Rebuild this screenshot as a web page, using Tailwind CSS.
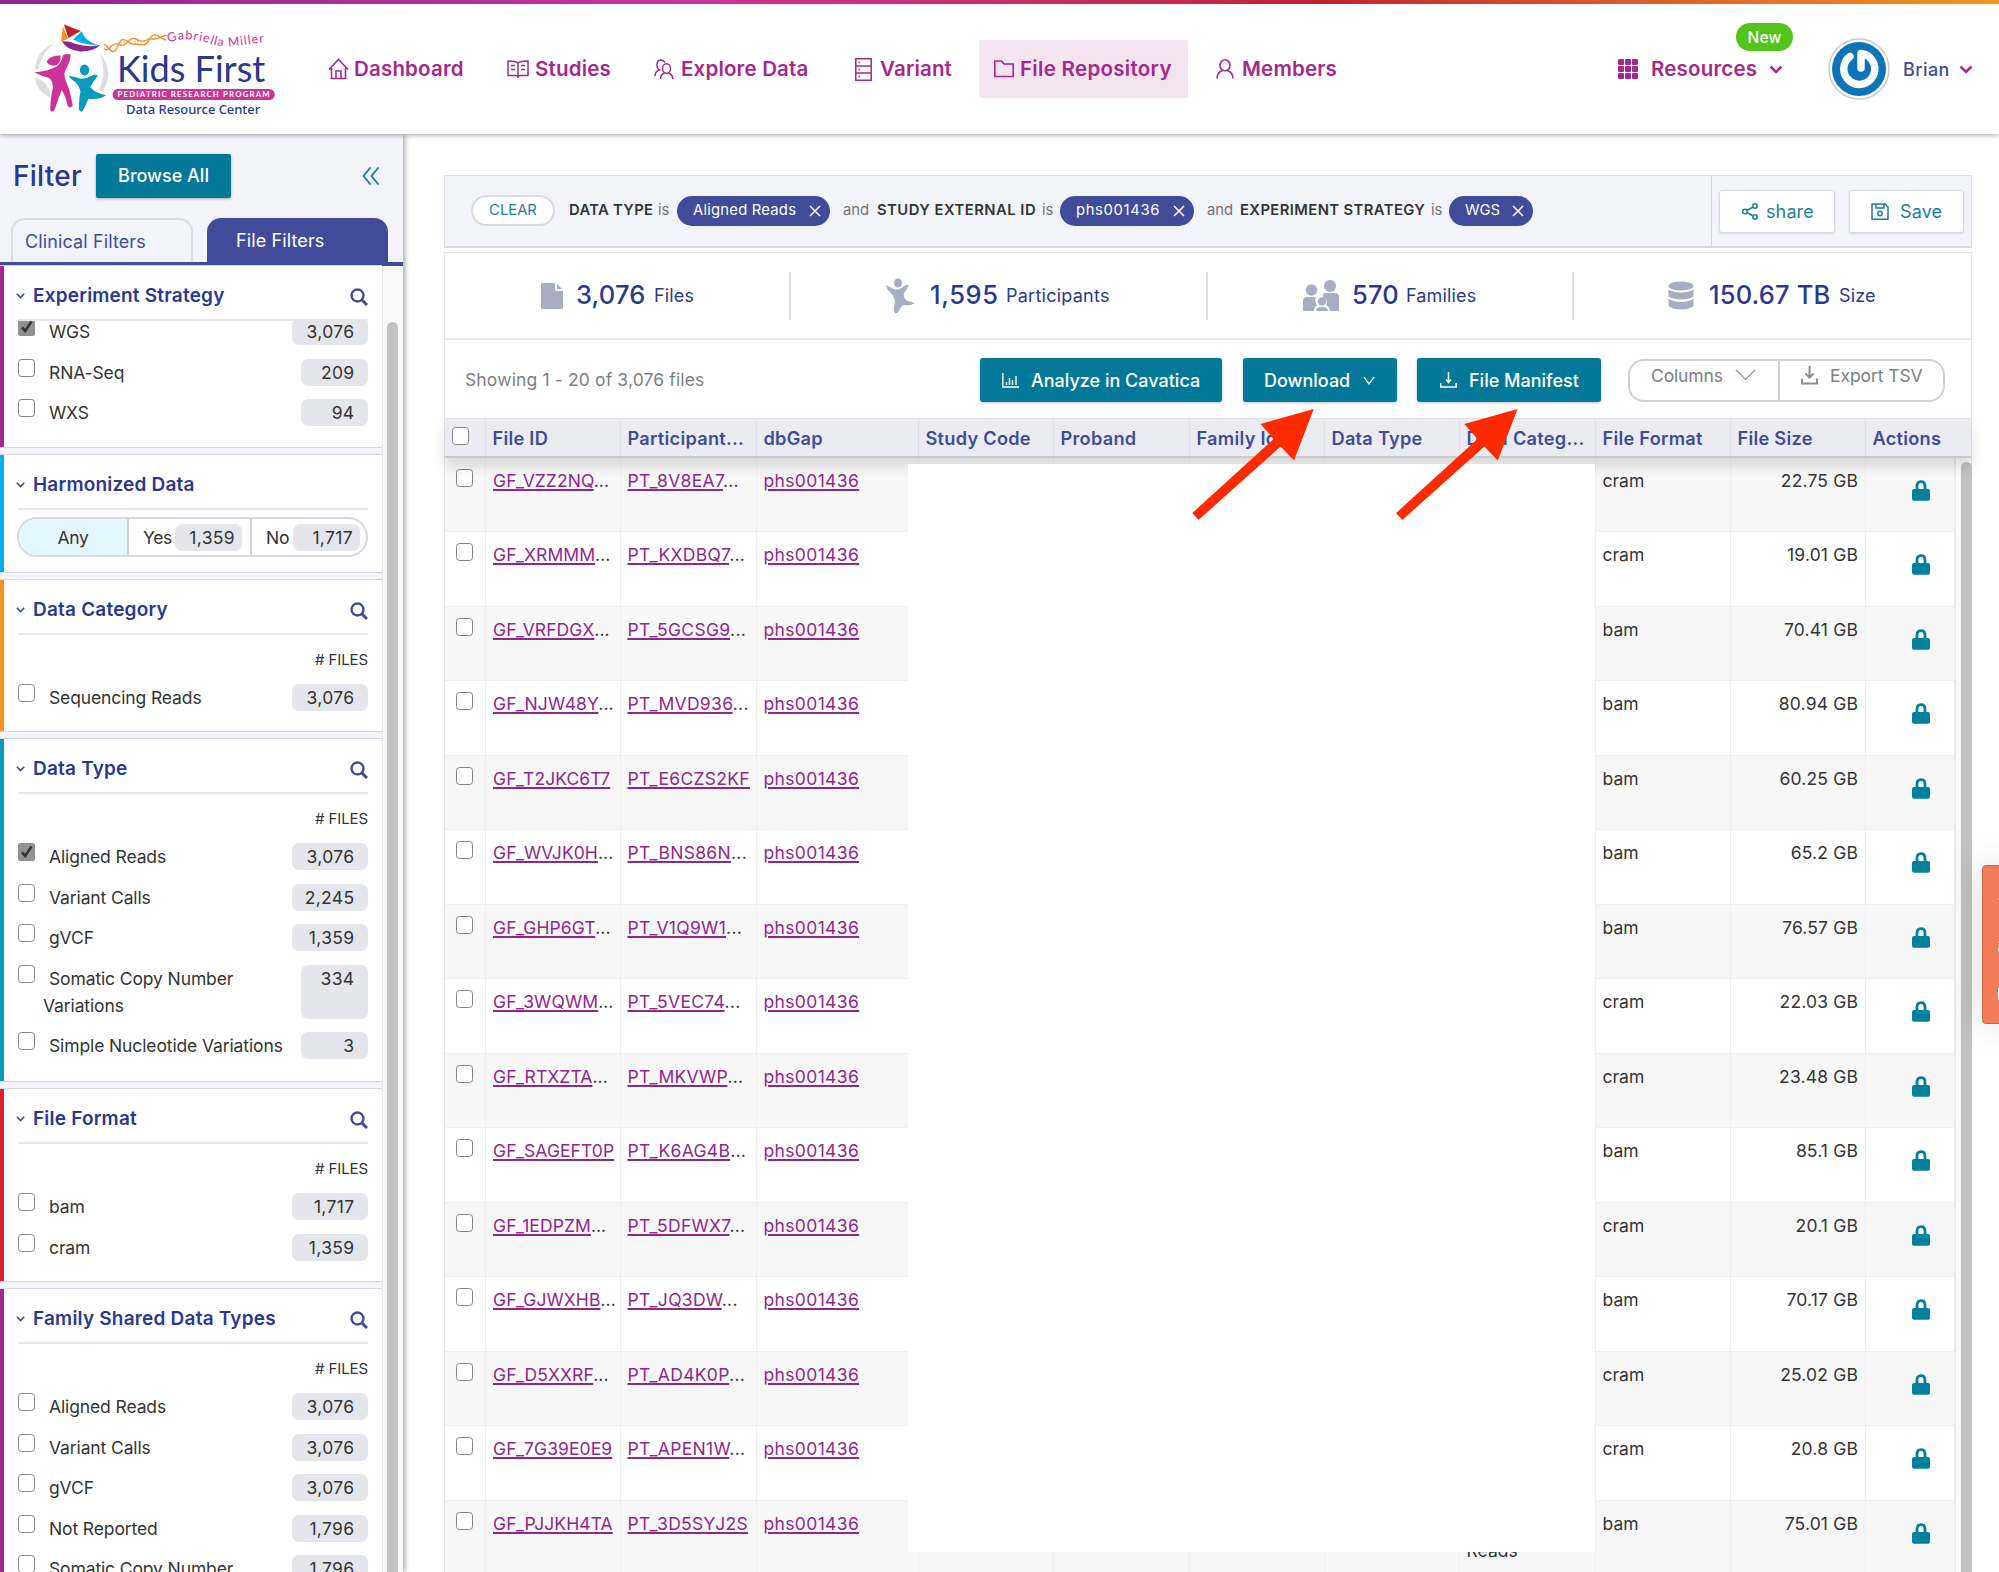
<!DOCTYPE html>
<html lang="en">
<head>
<meta charset="utf-8">
<title>Kids First Data Resource Center</title>
<script src="https://cdn.jsdelivr.net/npm/@tailwindcss/browser@4"></script>
</head>
<body class="w-[1999px] h-[1572px] overflow-hidden relative bg-white font-['Inter',sans-serif] text-[17.5px] text-[#343434]">

<header class="relative z-20 h-[134px] bg-white shadow-[0_1px_5px_rgba(0,0,0,0.35)]">
  <div class="h-1 bg-linear-to-r from-[#90278e] via-[#cc3399] via-35% to-[#f7931e]"><div class="h-1 ml-[700px] bg-linear-to-r from-[#cc3399] via-[#c1202d] via-48% to-[#f7931e]"></div></div>
  <div class="flex items-center h-[130px]">
    <svg class="ml-[19px] mr-[1px] shrink-0" width="270" height="120" viewBox="0 0 800 356">
      <g fill="#dcdddf">
        <path d="M47 178C50 140 72 110 106 102C82 118 62 145 58 178Z"/>
        <path d="M47 205C66 208 88 222 94 262C68 254 50 232 47 205Z"/>
        <path d="M238 130C268 165 275 205 247 243L236 240C255 205 254 168 238 130Z"/>
      </g>
      <path fill="#c1202d" d="M133 46L183 65L146 86Z"/>
      <path fill="#f7931e" d="M130 52L145 88L124 97Z"/>
      <path fill="#00aeef" d="M185 67Q197 98 235 107Q190 108 160 90Z"/>
      <path fill="#90278e" d="M127 96Q150 95 166 103Q205 115 241 107Q220 127 180 126Q140 122 127 96Z"/>
      <g fill="#cc3399">
        <path d="M82 156Q92 136 123 138Q124 168 101 168Q84 166 82 156Z"/>
        <path d="M45 188Q90 184 112 170Q126 158 130 137Q142 130 153 136Q151 160 136 184Q131 200 142 222Q152 245 159 288Q150 296 144 288Q138 258 126 240Q114 272 105 300Q97 310 92 300Q93 262 100 234Q100 212 88 204Q66 200 45 188Z"/>
      </g>
      <g fill="#0a9ab9">
        <ellipse cx="194" cy="181" rx="14" ry="16"/>
        <path d="M148 198Q170 202 183 207Q198 208 214 198Q225 192 234 197Q218 216 211 232Q226 250 258 256Q240 270 205 266Q196 290 188 303Q178 308 177 294Q178 262 182 245Q176 222 164 214Q152 210 148 198Z"/>
      </g>
      <g fill="none" stroke="#f7931e" stroke-width="4">
        <path d="M252 105C262 105 268 128 280 126C296 122 292 92 308 90C324 90 322 104 338 104C352 104 356 108 372 106C390 100 384 78 402 76C416 76 420 90 436 92"/>
        <path d="M252 118C266 128 268 108 284 104C296 100 300 112 312 106C326 98 326 84 342 88C356 92 360 100 374 94C388 84 396 92 410 88C422 84 424 78 438 78"/>
        <path stroke="#d9a08a" stroke-width="2" d="M262 108V122M270 108V124M294 96V110M302 92V110M312 92V108M320 92V102M344 88V104M352 92V106M360 96V106M384 86V96M394 78V92M404 76V90M412 78V88"/>
      </g>
      <path id="wave" fill="none" d="M443 100C480 82 530 92 560 100C610 122 660 104 740 98"/>
      <text fill="#cc3399" font-family="Lato" font-size="37" textLength="288" lengthAdjust="spacing"><textPath href="#wave" textLength="288">Gabriella Miller</textPath></text>
      <text x="290" y="217" fill="#2b388f" font-family="Lato" font-size="110" textLength="440" lengthAdjust="spacingAndGlyphs">Kids First</text>
      <rect x="277" y="237" width="481" height="33" rx="16" fill="#cc3399"/>
      <text x="292" y="262" fill="#fff" font-family="Lato" font-weight="700" font-size="23" textLength="451">PEDIATRIC RESEARCH PROGRAM</text>
      <text x="317" y="311" fill="#2b388f" font-family="Noto Sans" font-weight="500" font-size="37" textLength="398" lengthAdjust="spacingAndGlyphs">Data Resource Center</text>
    </svg>
    <nav class="flex items-center ml-[38px] text-[#a6278f] text-[20.500px] font-semibold tracking-[0.180px] h-[58px] whitespace-nowrap">
      <a class="flex items-center w-[179px]"><span class="w-[26px] shrink-0"><svg width="21" height="22" viewBox="0 0 21 22" fill="none" stroke="currentColor" stroke-width="1.6"><path d="M1 11.5L10.500 1.500L20 11.500M3.500 10V20.500H17.500V10M8 20V13H13V20"/></svg></span>Dashboard</a>
      <a class="flex items-center w-[147px]"><span class="w-[28px] shrink-0"><svg width="22" height="18" viewBox="0 0 22 18" fill="none" stroke="currentColor" stroke-width="1.5"><path d="M11 3Q9 1 1 1V15.500H8.500Q10.500 15.500 11 17Q11.500 15.500 13.500 15.500H21V1Q13 1 11 3V17M4 5.500H8M4 9.500H8M14 5.500H18M14 9.500H18"/></svg></span>Studies</a>
      <a class="flex items-center w-[201px]"><span class="w-[27px] shrink-0"><svg width="20" height="21" viewBox="0 0 20 21" fill="none" stroke="currentColor" stroke-width="1.5"><ellipse cx="12.500" cy="9.500" rx="4" ry="4.800"/><path d="M6.500 20Q6.500 15.500 10.500 14M14.500 14Q18.800 15.500 18.800 20M11 3.500Q9.500 1 7 1Q3 1.200 3 6Q3 9.500 5.500 10.800Q1 12.500 1 17"/></svg></span>Explore Data</a>
      <a class="flex items-center w-[124px]"><span class="w-[25px] shrink-0"><svg width="17" height="23" viewBox="0 0 17 23" fill="none" stroke="currentColor" stroke-width="1.5"><path d="M.8 .8H16.200V22.200H.8ZM.8 8H16.200M.8 15H16.200M3.500 4.500H5M3.500 11.500H5M3.500 18.500H5"/></svg></span>Variant</a>
      <a class="flex items-center w-[209px] h-[58px] pl-[15px] bg-[#f4e4f0] rounded-[2px]"><span class="w-[26px] shrink-0"><svg width="20" height="18" viewBox="0 0 20 18" fill="none" stroke="currentColor" stroke-width="1.600"><path d="M.8 1H7.500L10 4H19.200V16.500H.8Z"/></svg></span><span class="tracking-[0.300px]">File Repository</span></a>
      <a class="flex items-center ml-[28px]"><span class="w-[26px] shrink-0"><svg width="18" height="20" viewBox="0 0 18 20" fill="none" stroke="currentColor" stroke-width="1.600"><ellipse cx="9" cy="6.300" rx="5" ry="5.500"/><path d="M1 19.500Q1 13.500 6.500 11.500M11.500 11.500Q17 13.500 17 19.500"/></svg></span>Members</a>
    </nav>
    <div class="relative ml-auto flex items-center text-[#a6278f] mr-[45px] whitespace-nowrap">
      <svg width="20" height="20" viewBox="0 0 20 20" fill="currentColor"><path d="M0 1q0-1 1-1h4q1 0 1 1v4q0 1-1 1H1q-1 0-1-1ZM7 1q0-1 1-1h4q1 0 1 1v4q0 1-1 1H8q-1 0-1-1ZM14 1q0-1 1-1h4q1 0 1 1v4q0 1-1 1h-4q-1 0-1-1ZM0 8q0-1 1-1h4q1 0 1 1v4q0 1-1 1H1q-1 0-1-1ZM7 8q0-1 1-1h4q1 0 1 1v4q0 1-1 1H8q-1 0-1-1ZM14 8q0-1 1-1h4q1 0 1 1v4q0 1-1 1h-4q-1 0-1-1ZM0 15q0-1 1-1h4q1 0 1 1v4q0 1-1 1H1q-1 0-1-1ZM7 15q0-1 1-1h4q1 0 1 1v4q0 1-1 1H8q-1 0-1-1ZM14 15q0-1 1-1h4q1 0 1 1v4q0 1-1 1h-4q-1 0-1-1Z"/></svg>
      <span class="w-[118px] ml-[13px] pt-[1px] text-[20.500px] font-semibold tracking-[0.180px]">Resources</span>
      <svg width="14" height="9" viewBox="0 0 14 9" fill="none" stroke="currentColor" stroke-width="2.500"><path d="M1.500 1.500L7 7L12.500 1.500"/></svg>
      <span class="absolute left-[118px] -top-[30px] w-[57px] h-[28px] rounded-full bg-[#52c41a] text-white text-[15.500px] font-medium tracking-[0.200px] flex items-center justify-center">New</span>
    </div>
    <div class="flex items-center w-[171px] shrink-0">
      <svg width="62" height="62" viewBox="0 0 62 62"><circle cx="31" cy="31" r="30" fill="#fff" stroke="#c9cbd3" stroke-width="1.500"/><circle cx="31" cy="31" r="27" fill="#0c74b8"/><path d="M22 18.500A15.500 15.500 0 1 0 33 15.500V30" fill="none" stroke="#fff" stroke-width="7.500" stroke-linecap="round" stroke-linejoin="round"/></svg>
      <span class="w-[56px] ml-[13px] text-[18px] font-medium text-[#404c9a] tracking-[0.450px]">Brian</span>
      <svg width="14" height="9" viewBox="0 0 14 9" fill="none" stroke="#a6278f" stroke-width="2.500"><path d="M1.500 1.500L7 7L12.500 1.500"/></svg>
    </div>
  </div>
</header>

<div class="flex h-[1438px]">
  <aside class="relative z-10 w-[403px] shrink-0 bg-[#f3f4f9] shadow-[2px_0_5px_rgba(0,0,0,0.35)] overflow-hidden">
    <div class="flex items-center h-[84px] pl-[13px] pb-[1px]">
      <h2 class="w-[83px] text-[28px] font-medium text-[#2b388f] tracking-[0.250px]">Filter</h2>
      <button class="w-[135px] h-[44px] bg-[#037899] text-white text-[18px] rounded-[2px] shadow-[0_1px_3px_rgba(0,0,0,0.3)] font-medium">Browse All</button>
      <svg class="ml-[131px]" width="18" height="18" viewBox="0 0 18 18" fill="none" stroke="#1c809c" stroke-width="1.800"><path d="M8.500 .5L1.500 9L8.500 17.500M16.500 .5L9.500 9L16.500 17.500"/></svg>
    </div>
    <div class="flex h-[44px] pl-[11px] gap-[14px] text-[18px] tracking-[0.120px]">
      <div class="w-[182px] border-2 border-b-0 border-[#dcdde3] rounded-t-[14px] pl-[12px] pt-[1px] flex items-center text-[#404c9a]">Clinical Filters</div>
      <div class="w-[181px] bg-[#404c9a] rounded-t-[14px] pl-[29px] flex items-center text-white">File Filters</div>
    </div>
    <div class="h-1 bg-[#404c9a]"></div>
    <div class="flex">
      <div id="facets" class="w-[382px] shrink-0"></div>
      <div class="w-[21px] h-[1306px] bg-[#fafafa] border-l border-[#ebebeb] pl-[4px] pt-[56px]"><div class="w-[11px] h-[1260px] rounded-t-full bg-[#c1c1c1]"></div></div>
    </div>
  </aside>

  <main class="pl-[41px] pt-[41px] w-[1569px] shrink-0">
    <div class="flex h-[73px] bg-[#f3f4f9] border border-b-2 border-[#d9dbe2] whitespace-nowrap text-[14.800px]">
      <div class="flex items-center w-[1266px] pl-[26px] pb-[1px] text-[#737373]">
        <span class="w-[84px] h-[31px] mr-[14px] border-2 border-[#d8dae0] rounded-full bg-white text-[#1c809c] flex items-center justify-center">CLEAR</span>
        <b class="w-[89px] font-semibold text-[#343434] tracking-[0.300px]">DATA TYPE</b><span class="w-[19px]">is</span>
        <span class="w-[153px] h-[30px] mr-[13px] rounded-full bg-[#404c9a] text-white flex items-center justify-between pl-[16px] pr-[9px] tracking-[0.220px]">Aligned Reads<svg width="12" height="12" viewBox="0 0 12 12" stroke="#fff" stroke-width="1.500"><path d="M1 1L11 11M11 1L1 11"/></svg></span>
        <span class="w-[34px]">and</span><b class="w-[165px] font-semibold text-[#343434] tracking-[0.480px]">STUDY EXTERNAL ID</b><span class="w-[18px]">is</span>
        <span class="w-[134px] h-[30px] mr-[13px] rounded-full bg-[#404c9a] text-white flex items-center justify-between pl-[16px] pr-[9px] tracking-[0.650px]">phs001436<svg width="12" height="12" viewBox="0 0 12 12" stroke="#fff" stroke-width="1.500"><path d="M1 1L11 11M11 1L1 11"/></svg></span>
        <span class="w-[33px]">and</span><b class="w-[191px] font-semibold text-[#343434] tracking-[0.400px]">EXPERIMENT STRATEGY</b><span class="w-[18px]">is</span>
        <span class="w-[84px] h-[30px] rounded-full bg-[#404c9a] text-white flex items-center justify-between pl-[16px] pr-[9px]">WGS<svg width="12" height="12" viewBox="0 0 12 12" stroke="#fff" stroke-width="1.500"><path d="M1 1L11 11M11 1L1 11"/></svg></span>
      </div>
      <div class="flex items-center border-l border-[#d0d3db] pl-[7px] gap-[14px] text-[18px] text-[#1c809c] tracking-[0.120px]">
        <span class="w-[116px] h-[43px] bg-white border border-[#d9dbe2] rounded-[3px] shadow-[0_1px_2px_rgba(0,0,0,0.12)] flex items-center pl-[22px] gap-[8px]"><svg width="16" height="17" viewBox="0 0 16 17" fill="none" stroke="currentColor" stroke-width="1.600"><circle cx="3" cy="8.500" r="2.300"/><circle cx="13" cy="3" r="2.200"/><circle cx="13" cy="14" r="2.200"/><path d="M5 7.500L11 4M5 9.500L11 13"/></svg>share</span>
        <span class="w-[115px] h-[43px] bg-white border border-[#d9dbe2] rounded-[3px] shadow-[0_1px_2px_rgba(0,0,0,0.12)] flex items-center pl-[21px] gap-[11px]"><svg width="18" height="17" viewBox="0 0 18 17" fill="none" stroke="currentColor" stroke-width="1.500"><path d="M1 1H14L17 4V16.200H1ZM5 1V5H13V1"/><circle cx="9" cy="10.500" r="2.200"/></svg>Save</span>
      </div>
    </div>

    <section class="relative mt-[4px] border border-b-0 border-[#e3e4ea] h-[1330px]">
      <div class="flex items-center h-[87px] border-b-2 border-[#e9eaf0] text-[#2b388f] whitespace-nowrap text-[18px] tracking-[0.150px]">
        <div class="flex items-center w-[346px] pl-[96px] h-[48px] border-r-2 border-[#dcdde6]"><svg class="mr-[13px]" width="22" height="26" viewBox="0 0 22 26" fill="#a9adc2"><path d="M1 0H14V8H22V25Q22 26 21 26H1Q0 26 0 25V1Q0 0 1 0ZM16 1L21 6H16Z"/></svg><b class="w-[78px] text-[25.500px] font-medium">3,076</b>Files</div>
        <div class="flex items-center w-[417px] pl-[95px] h-[48px] border-r-2 border-[#dcdde6]"><svg class="mr-[15px]" width="29" height="36" viewBox="0 0 29 36" fill="#a9adc2"><ellipse cx="12" cy="5" rx="4" ry="4.600"/><path d="M0 7Q6 10 9 11.500Q13 12 17 9Q20 6 23 7Q21 11 18 15Q17 19 20 22Q24 24 29 25Q25 28 17 27Q14 30 12 34Q9 37 8 33Q8 27 9 23Q8 18 5 15Q1 12 0 7Z"/></svg><b class="w-[76px] text-[25.500px] font-medium tracking-[0.600px]">1,595</b><span class="tracking-[0.250px]">Participants</span></div>
        <div class="flex items-center w-[366px] pl-[95px] h-[48px] border-r-2 border-[#dcdde6]"><svg class="mr-[13px]" width="36" height="32" viewBox="0 0 36 32" fill="#a9adc2"><circle cx="8.500" cy="10" r="5.800"/><circle cx="27" cy="6" r="6"/><path d="M0 31V21Q0 17 4 17H13Q11 21 14 25Q11 27 11 31ZM20 14Q21 13 24 13H32Q36 13 36 17V31H27Q27 27 23 25Q26 20 20 17Z"/><circle cx="19" cy="21.500" r="4.200"/><path d="M13 31Q13 27 19 27Q25 27 25 31Z"/></svg><b class="w-[54px] text-[25.500px] font-medium">570</b>Families</div>
        <div class="flex items-center pl-[94px]"><svg class="mr-[15px]" width="26" height="29" viewBox="0 0 26 29" fill="#a9adc2"><ellipse cx="13" cy="5" rx="12.500" ry="4.500"/><path d="M.5 8.500Q6 11.500 13 11.500Q20 11.500 25.500 8.500V15.500Q21 18.500 13 18.500Q5 18.500 .5 15.500ZM.5 18Q6 21 13 21Q20 21 25.500 18V25Q21 28.500 13 28.500Q5 28.500 .5 25Z"/></svg><b class="w-[130px] text-[25.500px] font-medium">150.67 TB</b>Size</div>
      </div>

      <div class="flex items-center h-[78px] pt-[2px] pl-[20px] whitespace-nowrap text-white font-medium text-[18px]">
        <span class="w-[515px] pt-[1px] font-normal text-[17.500px] text-[#7d7e83] tracking-[0.140px]">Showing 1 - 20 of 3,076 files</span>
        <button class="flex items-center w-[242px] h-[44px] mr-[21px] bg-[#037899] rounded-[3px] shadow-[0_1px_3px_rgba(0,0,0,0.25)] pl-[22px]"><svg class="mr-[12px]" width="17" height="15" viewBox="0 0 17 15" fill="none" stroke="#fff" stroke-width="1.400"><path d="M.8 0V14H17M4.500 12V9M7.500 12V5M10.500 12V7M14 12V3"/></svg>Analyze in Cavatica</button>
        <button class="flex items-center w-[154px] h-[44px] mr-[20px] bg-[#037899] rounded-[3px] shadow-[0_1px_3px_rgba(0,0,0,0.25)] pl-[21px]"><span class="w-[99px] text-left">Download</span><svg width="12" height="9" viewBox="0 0 12 9" fill="none" stroke="#fff" stroke-width="1.300"><path d="M.8 .8L6 7.800L11.200 .8"/></svg></button>
        <button class="flex items-center w-[184px] h-[44px] mr-[27px] bg-[#037899] rounded-[3px] shadow-[0_1px_3px_rgba(0,0,0,0.25)] pl-[23px]"><svg class="mr-[12px]" width="17" height="16" viewBox="0 0 17 16" fill="none" stroke="#fff" stroke-width="1.500"><path d="M.8 11V15H16.200V11M8.500 0V10M6 7.500L8.500 10.500L11 7.500"/></svg>File Manifest</button>
        <div class="flex w-[317px] h-[43px] border-2 border-[#cfd1d6] rounded-[16px] text-[#7d7e83] font-normal text-[17.500px]">
          <div class="flex w-[150px] pl-[21px] pt-[2px] border-r-2 border-[#cfd1d6]"><span class="w-[84px] tracking-[-0.150px]">Columns</span><svg class="mt-[6px]" width="21" height="12" viewBox="0 0 21 12" fill="none" stroke="#8c8d92" stroke-width="1.200"><path d="M.8 .8L10.500 10.500L20.200 .8"/></svg></div>
          <div class="flex pl-[21px] pt-[2px]"><svg class="mt-[3px] mr-[12px]" width="17" height="19" viewBox="0 0 17 19" fill="none" stroke="#8c8d92" stroke-width="2"><path d="M1 12.500V17.500H16V12.500M8.500 0V11M4.500 7.500L8.500 11.500L12.500 7.500"/></svg><span class="tracking-[-0.080px]">Export TSV</span></div>
        </div>
      </div>

      <div id="thead" class="relative z-10 flex h-[40px] bg-[#ebecf1] border-t border-b-2 border-t-[#e2e2e6] border-b-[#c9cbcf] text-[#404c9a] text-[18.200px] font-semibold tracking-[0.260px] shadow-[0_8px_14px_rgba(0,0,0,0.13)] whitespace-nowrap"></div>
      <div class="flex h-[1130px]">
        <div id="tbody" class="w-[1510px] shrink-0"></div>
        <div class="w-[16px] bg-[#fafafa] border-l border-[#e6e6e6] pl-[5px] pt-[4px]"><div class="w-[11px] h-[1130px] rounded-t-full bg-[#c1c1c1]"></div></div>
      </div>
      <div class="absolute z-20 left-[463px] top-[211px] w-[687px] h-[1088px] bg-white"></div>
    </section>
  </main>
</div>

<svg class="absolute z-30 left-[1190px] top-[405px]" width="340" height="120" viewBox="1190 405 340 120" fill="#ff2a00">
  <path id="arrow" d="M1313.700 409L1260.500 424L1273.700 439L1192.300 513L1198.500 520L1280.600 446.500L1294 460.500Z"/>
  <use href="#arrow" x="203.800"/>
</svg>

<div class="absolute z-30 left-[1982px] top-[865px] w-[24px] h-[159px] rounded-[4px] bg-[#f27c57] border border-[#c4694c] shadow-[0_0_36px_rgba(0,0,0,0.16)]">
  <svg class="absolute left-[15px] top-0" width="3" height="157" viewBox="0 0 3 157" fill="#fff"><path d="M0 33L3 30V36ZM0 76L3 73V79ZM0 82H3V85H0ZM0 122H3V134H0Z"/></svg>
</div>

<script>
const box = (on) => on
  ? '<svg class="shrink-0" width="17" height="18" viewBox="0 0 17 18"><rect width="17" height="18" rx="2.500" fill="#919191"/><path d="M4 9.500L7.200 13L13.500 3.500" fill="none" stroke="#343434" stroke-width="2.600"/></svg>'
  : '<span class="block shrink-0 w-[17px] h-[18px] rounded-[3.500px] border-[1.500px] border-[#858585] bg-white"></span>';

const facetRow = ([label, count, on]) => `
  <div class="flex mb-[13.600px] leading-[27px] pr-[14px] pl-[14px]">
    ${box(on)}
    <div class="w-[200px] ml-[8px] indent-[6px] tracking-[-0.120px] ${label.startsWith('Simple') ? 'whitespace-nowrap' : ''}">${label}</div>
    <div class="relative ml-auto ${count.length > 3 ? 'w-[76px]' : 'w-[67px]'} bg-[#e5e6ec] rounded-[7px] pr-[13.500px] text-right tracking-[0.350px]">${count}</div>
  </div>`;

const facet = ({ title, height, color, search = true, body }) => `
  <section class="${height} ${color} mb-[8px] bg-white border-l-4 shadow-[0_1px_0_#d5d7e0,0_-1px_0_#d5d7e0] overflow-hidden">
    <div class="flex items-center h-[55px] mx-[14px] pt-[7px] border-b-2 border-[#e6e7ed]">
      <svg class="mr-[8px] shrink-0 -ml-[2px]" width="9" height="6" viewBox="0 0 9 6" fill="none" stroke="#404c9a" stroke-width="1.600"><path d="M.8 .8L4.500 4.500L8.200 .8"/></svg>
      <h3 class="text-[19px] font-semibold text-[#2b388f] tracking-[0.200px]">${title}</h3>
      ${search ? '<svg class="ml-auto mt-[2px]" width="18" height="18" viewBox="0 0 18 18" fill="none" stroke="#404c9a" stroke-width="2.400"><circle cx="7.500" cy="7.500" r="6"/><path d="M12 12L17 17" stroke-width="3"/></svg>' : ''}
    </div>
    ${body}
  </section>`;

const filesHead = '<div class="flex justify-end items-center h-[49px] pr-[14px] pt-[2px] text-[15px] tracking-[-0.100px]"># FILES</div>';

document.getElementById('facets').innerHTML = [
  { title: 'Experiment Strategy', height: 'h-[181px]', color: 'border-[#a6278f]', body: '<div class="overflow-hidden"><div class="-mt-[3px]">' + [['WGS', '3,076', 1], ['RNA-Seq', '209'], ['WXS', '94']].map(facetRow).join('') + '</div></div>' },
  { title: 'Harmonized Data', height: 'h-[117px]', color: 'border-[#00aeef]', search: false, body: `
    <div class="flex w-[351px] h-[40px] ml-[13px] mt-[7px] border-2 border-[#d8dae0] rounded-full overflow-hidden leading-[27px]">
      <div class="w-[110px] border-r-2 border-[#d0d3da] bg-[#e4f6fd] flex items-center justify-center tracking-[-0.300px]">Any</div>
      <div class="w-[123px] border-r-2 border-[#d0d3da] flex items-center pl-[14px]"><span class="w-[32px] tracking-[-0.400px]">Yes</span><span class="w-[67px] bg-[#e5e6ec] rounded-[7px] pr-[7px] text-right tracking-[0.350px]">1,359</span></div>
      <div class="flex items-center pl-[14px]"><span class="w-[27px] tracking-[-0.300px]">No</span><span class="w-[67px] bg-[#e5e6ec] rounded-[7px] pr-[7px] text-right tracking-[0.350px]">1,717</span></div>
    </div>` },
  { title: 'Data Category', height: 'h-[151px]', color: 'border-[#f7931e]', body: filesHead + facetRow(['Sequencing Reads', '3,076']) },
  { title: 'Data Type', height: 'h-[342px]', color: 'border-[#0a9ab9]', body: filesHead + [['Aligned Reads', '3,076', 1], ['Variant Calls', '2,245'], ['gVCF', '1,359'], ['Somatic Copy Number Variations', '334'], ['Simple Nucleotide Variations', '3']].map(facetRow).join('') },
  { title: 'File Format', height: 'h-[192px]', color: 'border-[#db202e]', body: filesHead + [['bam', '1,717'], ['cram', '1,359']].map(facetRow).join('') },
  { title: 'Family Shared Data Types', height: 'h-[400px]', color: 'border-[#a6278f]', body: filesHead + [['Aligned Reads', '3,076'], ['Variant Calls', '3,076'], ['gVCF', '3,076'], ['Not Reported', '1,796'], ['Somatic Copy Number Variations', '1,796']].map(facetRow).join('') },
].map(facet).join('');

const cols = [['', 'w-[41px]'], ['File ID', 'w-[135px]'], ['Participant...', 'w-[136px]'], ['dbGap', 'w-[162px]'], ['Study Code', 'w-[135px]'], ['Proband', 'w-[136px]'], ['Family Id', 'w-[135px]'], ['Data Type', 'w-[135px]'], ['Data Categ...', 'w-[136px]'], ['File Format', 'w-[135px]'], ['File Size', 'w-[135px]'], ['Actions', 'w-[89px]']];
document.getElementById('thead').innerHTML = cols.map(([t, w], i) => i === 0
  ? `<div class="${w} border-r border-[#dfe0e5] pl-[7px] pt-[8px]">${box()}</div>`
  : `<div class="${w} shrink-0 ${i < 11 ? 'border-r' : ''} border-[#dfe0e5] pl-[6.500px] leading-[39px]">${t}</div>`).join('');

const rows = [
  ['GF_VZZ2NQ...', 'PT_8V8EA7...', 'cram', '22.75 GB'], ['GF_XRMMM...', 'PT_KXDBQ7...', 'cram', '19.01 GB'],
  ['GF_VRFDGX...', 'PT_5GCSG9...', 'bam', '70.41 GB'], ['GF_NJW48Y...', 'PT_MVD936...', 'bam', '80.94 GB'],
  ['GF_T2JKC6T7', 'PT_E6CZS2KF', 'bam', '60.25 GB'], ['GF_WVJK0H...', 'PT_BNS86N...', 'bam', '65.2 GB'],
  ['GF_GHP6GT...', 'PT_V1Q9W1...', 'bam', '76.57 GB'], ['GF_3WQWM...', 'PT_5VEC74...', 'cram', '22.03 GB'],
  ['GF_RTXZTA...', 'PT_MKVWP...', 'cram', '23.48 GB'], ['GF_SAGEFT0P', 'PT_K6AG4B...', 'bam', '85.1 GB'],
  ['GF_1EDPZM...', 'PT_5DFWX7...', 'cram', '20.1 GB'], ['GF_GJWXHB...', 'PT_JQ3DW...', 'bam', '70.17 GB'],
  ['GF_D5XXRF...', 'PT_AD4K0P...', 'cram', '25.02 GB'], ['GF_7G39E0E9', 'PT_APEN1W...', 'cram', '20.8 GB'],
  ['GF_PJJKH4TA', 'PT_3D5SYJ2S', 'bam', '75.01 GB'],
];
const link = (t) => {
  const dots = t.endsWith('...');
  return `<a class="text-[#90278e] underline underline-offset-[2px] decoration-[1.500px]">${dots ? t.slice(0, -3) : t}</a>${dots ? '...' : ''}`;
};
const lock = '<svg width="18" height="21" viewBox="0 0 18 21"><path d="M5 10V6Q5 1.700 9 1.700Q13 1.700 13 6V10" fill="none" stroke="#03809b" stroke-width="2.800"/><rect y="9" width="18" height="11.800" rx="2" fill="#03809b"/></svg>';
const cellStyle = (j) => ({
  0: 'pl-[11px] pt-[11px]',
  1: 'pl-[7px] pt-[9px] tracking-[0.080px] whitespace-nowrap',
  2: 'pl-[6.500px] pt-[9px] tracking-[0.300px] whitespace-nowrap',
  3: 'pl-[6.500px] pt-[9px] tracking-[0.350px] whitespace-nowrap',
  10: 'pr-[7px] pt-[9px] text-right tracking-[0.150px] whitespace-nowrap',
  11: 'pl-[46px] pt-[22px]',
}[j] || 'pl-[6.500px] pt-[9px]');
document.getElementById('tbody').innerHTML = rows.map((r, i) => {
  const cells = [box(), link(r[0]), link(r[1]), link('phs001436'), '', '', '', '', i === 14 ? 'Sequencing Reads' : '', r[2], r[3], lock];
  return `<div class="flex h-[74.480px] overflow-hidden ${i % 2 ? 'bg-white' : 'bg-[#f7f7f7]'}">` + cells.map((x, j) =>
    `<div class="${cols[j][1]} ${cellStyle(j)} shrink-0 border-r border-b border-[#efefef] leading-[27px]">${x}</div>`
  ).join('') + '</div>';
}).join('');
</script>
</body>
</html>
